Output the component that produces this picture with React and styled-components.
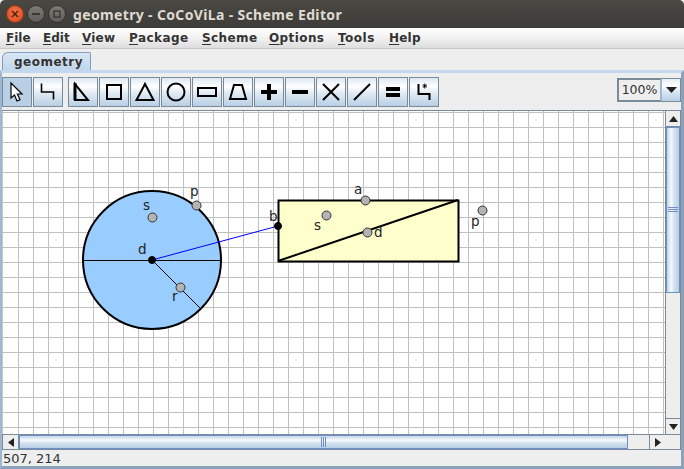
import React from 'react';
import styled, { createGlobalStyle } from 'styled-components';

const Global = createGlobalStyle`
  html, body { margin: 0; padding: 0; background: #eeeeee; }
  body { font-family: "DejaVu Sans", sans-serif; }
  * { box-sizing: border-box; }
`;

const Window = styled.div`
  width: 684px; height: 469px; display: flex; flex-direction: column;
  background: #eeeeee; overflow: hidden;
`;
const TitleBar = styled.div`
  height: 28px; flex: none; display: flex; align-items: center; padding-left: 6px;
  background: linear-gradient(#4a4843, #3d3c38);
  border-radius: 5px 5px 0 0;
`;
const WinButtons = styled.div`display: flex; gap: 3px; width: 67px; flex: none;`;
const WinButton = styled.div`
  width: 18px; height: 18px; border-radius: 50%;
  display: flex; align-items: center; justify-content: center;
  background: ${p => p.$close ? 'radial-gradient(circle at 50% 40%, #f0754a, #d9471c)' : 'linear-gradient(#7b7a74, #5f5e58)'};
  border: 1px solid ${p => p.$close ? '#8f3515' : '#33322f'};
`;
const Title = styled.div`
  font: bold 14px "Noto Sans", sans-serif; color: #dfdbd2; white-space: nowrap; letter-spacing: 0.35px;
`;
const MenuBar = styled.div`
  height: 21px; flex: none; display: flex; align-items: center; padding: 0 0 1px 6px;
  background: linear-gradient(#ffffff, #f3f3f3 45%, #dddddd);
  border-bottom: 1px solid #c8c8c8;
`;
const MenuItem = styled.div`
  width: ${p => p.$w}px; flex: none;
  font: bold 12px "DejaVu Sans", sans-serif; color: #333333; white-space: nowrap; letter-spacing: ${p => p.$ls}px;
  u { text-underline-offset: 2px; }
`;
const TabStrip = styled.div`height: 22px; flex: none; padding: 3px 0 0 2px; display: flex;`;
const Tab = styled.div`
  width: 89px; height: 20px; padding: 0 0 2px 11px; display: flex; align-items: center;
  background: linear-gradient(#d8e6f4, #bfd5ea);
  border: 1px solid #7f9dc0; border-bottom: none; border-radius: 6px 2px 0 0;
  font: bold 12px "DejaVu Sans", sans-serif; color: #333333; letter-spacing: 0.5px;
`;
const TabPanel = styled.div`
  flex: 1; min-height: 0; display: flex; flex-direction: column;
  margin-top: -1px;
  border-top: 3px solid #c3d8ee;
  border-bottom: 3px solid #8aa0bb; border-right: 3px solid #8da1b9; border-left: 2px solid #9fb6d0;
  background: #eeeeee;
`;
const ToolBar = styled.div`
  height: 37px; flex: none; display: flex; align-items: center; padding: 1px 0;
`;
const ToolGroup = styled.div`display: flex; gap: 1px; margin-right: ${p => p.$gap || 0}px;`;
const ToolButton = styled.div`
  width: 30px; height: 30px; display: flex; align-items: center; justify-content: center;
  border: 1px solid #7a8a99;
  background: ${p => p.$active
    ? '#b8cfe5'
    : 'linear-gradient(#dde8f3, #ffffff 30%, #e4edf5 50%, #b8cfe5)'};
`;
const Spacer = styled.div`flex: 1;`;
const Zoom = styled.div`display: flex; height: 24px; margin-top: -4px;`;
const ZoomField = styled.div`
  width: 45px; display: flex; align-items: center; justify-content: center;
  font: 12.500px "DejaVu Sans", sans-serif; color: #333333; background: #eeeeee;
  border: 2px solid #a3b8cc; border-color: #7a8a99 #a3b8cc #7a8a99 #7a8a99;
`;
const ZoomArrow = styled.div`
  width: 19px; display: flex; align-items: center; justify-content: center;
  border: 1px solid #7a8a99; border-left: none;
  background: linear-gradient(#e4edf5, #ffffff 30%, #dde8f3 55%, #b8cfe5);
`;
const ScrollArea = styled.div`
  flex: 1; min-height: 0; display: grid; grid-template-columns: 1fr 16px; grid-template-rows: 1fr 16px;
  border-top: 1px solid #7a8a99;
`;
const Canvas = styled.svg`display: block; width: 100%; height: 100%; background: #ffffff; border-left: 1px solid #c4c4c4;`;
const VBar = styled.div`
  display: flex; flex-direction: column; background: #eeeeee;
  border-left: 1px solid #7a8a99; border-right: 1px solid #7a8a99;
`;
const HBar = styled.div`
  display: flex; background: #eeeeee;
  border-top: 1px solid #7a8a99; border-bottom: 1px solid #7a8a99; border-left: 1px solid #7a8a99;
`;
const Corner = styled.div`
  background: #eeeeee; border-top: 1px solid #7a8a99; border-bottom: 1px solid #7a8a99; border-right: 1px solid #7a8a99;
`;
const ArrowBtn = styled.div`
  flex: none; display: flex; align-items: center; justify-content: center;
  width: ${p => p.$h ? '16px' : '100%'}; height: ${p => p.$h ? '100%' : '16px'};
  background: #eeeeee;
  ${p => p.$side}: 1px solid #7a8a99;
`;
const VThumb = styled.div`
  height: 166px; flex: none; display: flex; align-items: center; justify-content: center;
  border: 1px solid #6d8fc8;
  background: linear-gradient(90deg, #c3d6ea, #f6f9fc 35%, #d4e2f0 60%, #b8cfe5);
`;
const HThumb = styled.div`
  width: 609px; flex: none; display: flex; align-items: center; justify-content: center;
  border: 1px solid #6d8fc8;
  background: linear-gradient(#c3d6ea, #f6f9fc 35%, #d4e2f0 60%, #b8cfe5);
`;
const Track = styled.div`flex: 1;`;
const Status = styled.div`
  height: 16px; flex: none; display: flex; align-items: center; padding: 0 0 0 1px;
  font: 13px "DejaVu Sans", sans-serif; color: #333333; background: #eeeeee;
`;

const Ic = ({ children, sw = 2 }) => (
  <svg width="22" height="22" viewBox="0 0 22 22" fill="none" stroke="#000" strokeWidth={sw}>{children}</svg>
);

const GRID_X = Array.from({ length: 45 }, (_, i) => i * 15);
const GRID_Y = Array.from({ length: 23 }, (_, i) => i * 15);

const Dot = ({ x, y, dark }) => (
  <circle cx={x} cy={y} r={dark ? 3.5 : 4.5} fill={dark ? '#000' : '#b3b3b3'} stroke={dark ? '#000' : '#333'} strokeWidth="1" />
);
const Label = ({ x, y, children }) => (
  <text x={x} y={y} fontFamily='"DejaVu Sans", sans-serif' fontSize="13.5" fill="#222">{children}</text>
);

const MENU = [
  ['F', 'ile', 37, 0], ['E', 'dit', 39, 0], ['V', 'iew', 47, 0.2], ['P', 'ackage', 73, 0.45],
  ['S', 'cheme', 67, 0.4], ['O', 'ptions', 69, 0.4], ['T', 'ools', 51, 0.5], ['H', 'elp', 40, 0.2],
];

export default function App() {
  return (
    <Window>
      <Global />
      <TitleBar>
        <WinButtons>
          <WinButton $close>
            <svg width="8" height="8" viewBox="0 0 8 8" stroke="#5a1d08" strokeWidth="1.6"><path d="M1 1l6 6M7 1l-6 6" /></svg>
          </WinButton>
          <WinButton>
            <svg width="8" height="8" viewBox="0 0 8 8" stroke="#3a3934" strokeWidth="2"><path d="M0 4h8" /></svg>
          </WinButton>
          <WinButton>
            <svg width="8" height="8" viewBox="0 0 8 8" fill="none" stroke="#3a3934" strokeWidth="1.4"><rect x="1" y="1" width="6" height="6" /></svg>
          </WinButton>
        </WinButtons>
        <Title>geometry - CoCoViLa - Scheme Editor</Title>
      </TitleBar>
      <MenuBar>
        {MENU.map(([a, b, w, ls]) => <MenuItem key={a} $w={w} $ls={ls}><u>{a}</u>{b}</MenuItem>)}
      </MenuBar>
      <TabStrip><Tab>geometry</Tab></TabStrip>
      <TabPanel>
        <ToolBar>
          <ToolGroup $gap={5}>
            <ToolButton $active>
              <svg width="22" height="22" viewBox="0 0 22 22"><path d="M5 2v15l3.500-3 2.500 6 3-1.300-2.600-5.700H16z" fill="#fff" stroke="#000" strokeWidth="1.2" /></svg>
            </ToolButton>
            <ToolButton><Ic sw={1.6}><path d="M4.500 2.500v8.500h12v7.500" /></Ic></ToolButton>
          </ToolGroup>
          <ToolGroup>
            <ToolButton><Ic><path d="M3 3v16h13z" /><path d="M3 2v17" strokeWidth="3" /></Ic></ToolButton>
            <ToolButton><Ic><rect x="4" y="4" width="14" height="14" /></Ic></ToolButton>
            <ToolButton><Ic><path d="M11 3L2.500 19h17z" /></Ic></ToolButton>
            <ToolButton><Ic><circle cx="11" cy="11" r="8.500" /></Ic></ToolButton>
            <ToolButton><Ic><rect x="2" y="7" width="18" height="8" /></Ic></ToolButton>
            <ToolButton><Ic><path d="M7 4h8l4 14H3z" /></Ic></ToolButton>
            <ToolButton><Ic sw={4}><path d="M11 3v16M3 11h16" /></Ic></ToolButton>
            <ToolButton><Ic sw={4}><path d="M3 11h16" /></Ic></ToolButton>
            <ToolButton><Ic sw={2}><path d="M3 3l16 16M19 3L3 19" /></Ic></ToolButton>
            <ToolButton><Ic sw={2}><path d="M3 19L19 3" /></Ic></ToolButton>
            <ToolButton><Ic sw={4}><path d="M4 8h14M4 14h14" /></Ic></ToolButton>
            <ToolButton>
              <Ic sw={2}>
                <path d="M5.500 3v10h11v6" />
                <path d="M11.700 2.500v5M9.500 5h4.500M10 3.300l3.400 3.400M13.400 3.300L10 6.700" strokeWidth="0.9" />
              </Ic>
            </ToolButton>
          </ToolGroup>
          <Spacer />
          <Zoom>
            <ZoomField>100%</ZoomField>
            <ZoomArrow>
              <svg width="11" height="6" viewBox="0 0 11 6"><path d="M0 0h11L5.500 6z" fill="#222" /></svg>
            </ZoomArrow>
          </Zoom>
        </ToolBar>
        <ScrollArea>
          <Canvas>
            <g transform="translate(-3 -111)">
              <g stroke="#c0c0c0" strokeWidth="1" shapeRendering="crispEdges">
                {GRID_X.map(i => <line key={i} x1={i + 18.5} x2={i + 18.5} y1="100" y2="440" />)}
                {GRID_Y.map(i => <line key={i} x1="0" x2="684" y1={i + 112.5} y2={i + 112.5} />)}
              </g>
              <circle cx="152" cy="260" r="69" fill="#99ccff" stroke="#000" strokeWidth="2" />
              <path d="M83 260.500H221M152 260L200.500 308.500" stroke="#000" strokeWidth="1" fill="none" />
              <rect x="278.500" y="200.500" width="180" height="61" fill="#ffffcc" stroke="#000" strokeWidth="2" />
              <path d="M278 261L458 200" stroke="#000" strokeWidth="2" />
              <path d="M152 260L278 226" stroke="#0000ff" strokeWidth="1" />
              <Dot x={196.500} y={205.500} />
              <Dot x={152.500} y={217.500} />
              <Dot x={180.500} y={287.500} />
              <Dot x={152} y={260} dark />
              <Dot x={278} y={226} dark />
              <Dot x={365.500} y={200.500} />
              <Dot x={326.500} y={215.500} />
              <Dot x={367.500} y={232.500} />
              <Dot x={482.500} y={210.500} />
              <Label x="143" y="210">s</Label>
              <Label x="190" y="196">p</Label>
              <Label x="138" y="254">d</Label>
              <Label x="172" y="301">r</Label>
              <Label x="269" y="221">b</Label>
              <Label x="354" y="194">a</Label>
              <Label x="314" y="230">s</Label>
              <Label x="374" y="237">d</Label>
              <Label x="471" y="226">p</Label>
            </g>
          </Canvas>
          <VBar>
            <ArrowBtn $side="border-bottom">
              <svg width="9" height="6" viewBox="0 0 9 6"><path d="M0 6h9L4.500 0z" fill="#222" /></svg>
            </ArrowBtn>
            <VThumb>
              <svg width="10" height="6" viewBox="0 0 10 6" stroke="#6d8fc8"><path d="M0 .5h10M0 2.500h10M0 4.500h10" /></svg>
            </VThumb>
            <Track />
            <ArrowBtn $side="border-top">
              <svg width="9" height="6" viewBox="0 0 9 6"><path d="M0 0h9L4.500 6z" fill="#222" /></svg>
            </ArrowBtn>
          </VBar>
          <HBar>
            <ArrowBtn $h $side="border-right">
              <svg width="6" height="9" viewBox="0 0 6 9"><path d="M6 0v9L0 4.500z" fill="#222" /></svg>
            </ArrowBtn>
            <HThumb>
              <svg width="6" height="10" viewBox="0 0 6 10" stroke="#6d8fc8"><path d="M.5 0v10M2.500 0v10M4.500 0v10" /></svg>
            </HThumb>
            <Track />
            <ArrowBtn $h $side="border-left">
              <svg width="6" height="9" viewBox="0 0 6 9"><path d="M0 0v9l6-4.500z" fill="#222" /></svg>
            </ArrowBtn>
          </HBar>
          <Corner />
        </ScrollArea>
        <Status>507, 214</Status>
      </TabPanel>
    </Window>
  );
}
